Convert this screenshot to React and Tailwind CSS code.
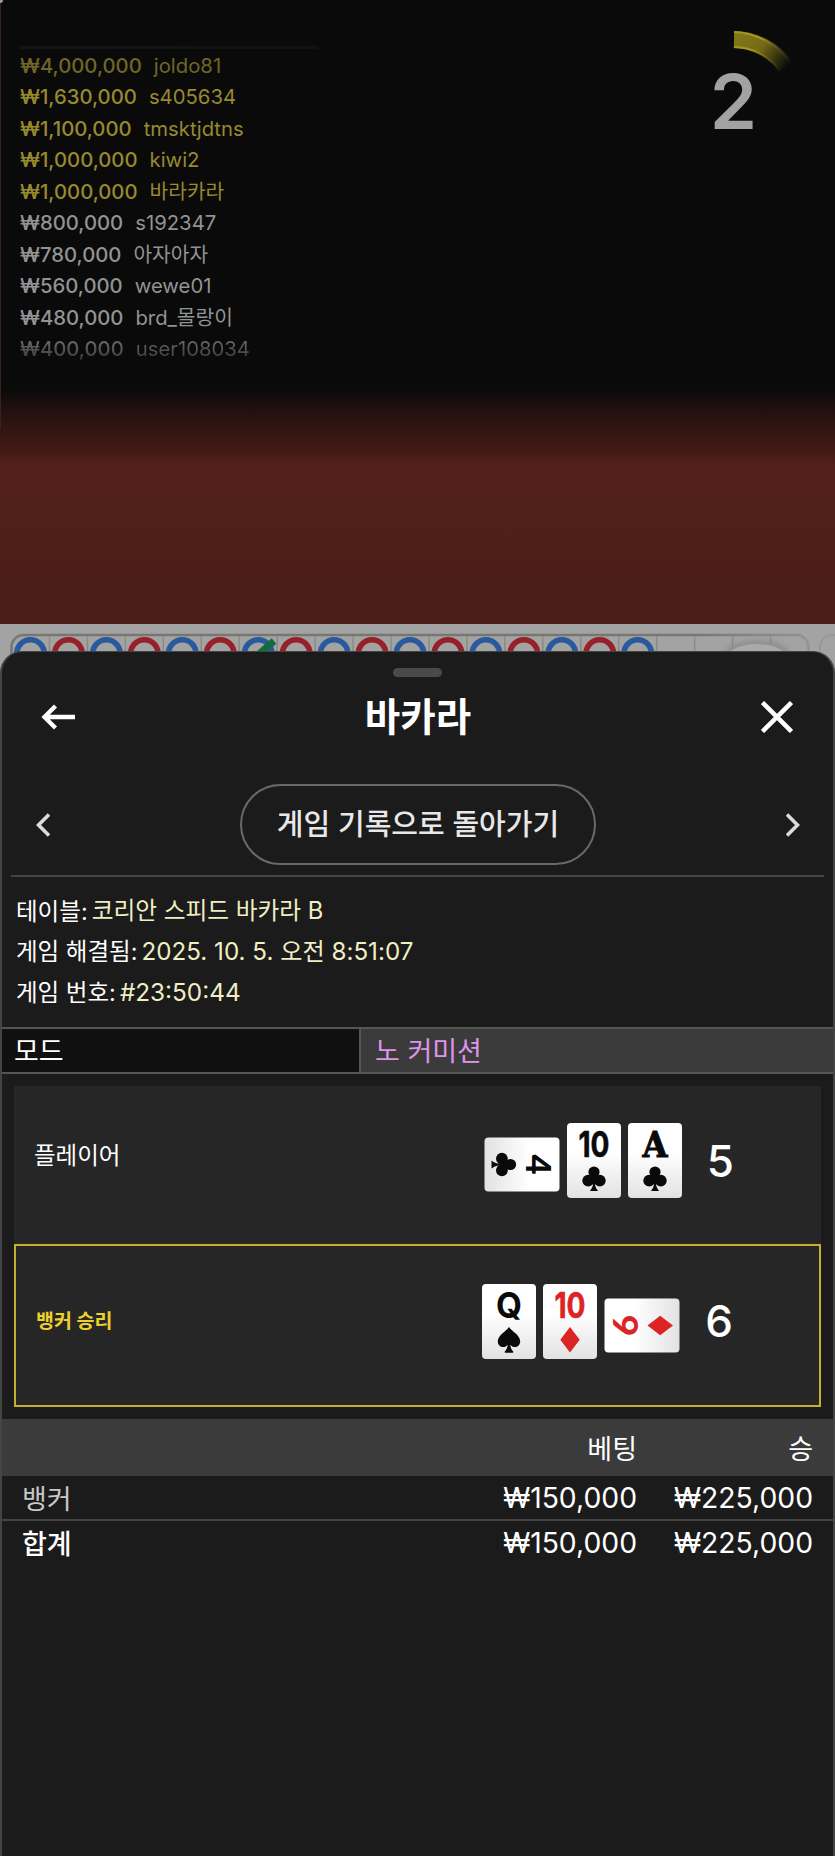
import { clsx } from 'clsx';

const bets = [
  { amount: '₩4,000,000', user: 'joldo81', tone: 'text-[#6f6627]' },
  { amount: '₩1,630,000', user: 's405634', tone: 'text-[#98892f]' },
  { amount: '₩1,100,000', user: 'tmsktjdtns', tone: 'text-[#98892f]' },
  { amount: '₩1,000,000', user: 'kiwi2', tone: 'text-[#98892f]' },
  { amount: '₩1,000,000', user: '바라카라', tone: 'text-[#98892f]' },
  { amount: '₩800,000', user: 's192347', tone: 'text-[#939393]' },
  { amount: '₩780,000', user: '아자아자', tone: 'text-[#939393]' },
  { amount: '₩560,000', user: 'wewe01', tone: 'text-[#939393]' },
  { amount: '₩480,000', user: 'brd_몰랑이', tone: 'text-[#939393]' },
  { amount: '₩400,000', user: 'user108034', tone: 'bg-gradient-to-b from-[#787878] to-[#303030] bg-clip-text text-transparent' },
];

const road = 'BPBPBPBPBPBPBPBPB'.split('');

const suits = {
  club: (
    <g>
      <circle cx="27" cy="49" r="5.6" />
      <circle cx="21.2" cy="57.6" r="5.9" />
      <circle cx="32.8" cy="57.6" r="5.9" />
      <path d="M25.5 52h3l1 6-1.6 3.3c.5 2.4 1.4 4.5 3.1 6.7h-8c1.7-2.2 2.6-4.3 3.1-6.7L24.5 58z" />
    </g>
  ),
  spade: <path d="M27 43c3 4.5 11.2 8.3 11.2 14.5 0 3.3-2.5 5.6-5.4 5.6-1.8 0-3.3-.8-4.5-2.3.3 3 1.1 4.9 2.9 6.7v1.3h-8.4v-1.3c1.8-1.8 2.6-3.7 2.9-6.7-1.2 1.5-2.7 2.3-4.5 2.3-2.9 0-5.4-2.3-5.4-5.6C15.8 51.3 24 47.5 27 43z" />,
  diamond: <path d="M27 43l9.7 12.7L27 68.5l-9.7-12.8z" />,
};

const ranks = {
  A: { width: 25, font: 'DejaVu Serif', size: 35, weight: 700, outline: 1 },
  4: { width: 20, font: 'Lato', size: 35, weight: 900, outline: 0 },
  10: { width: 31, font: 'Inter', size: 36, weight: 700, outline: 0.6 },
  Q: { width: 26, font: 'Inter', size: 35, weight: 700, outline: 0 },
  6: { width: 21, font: 'Lato', size: 35, weight: 900, outline: 0 },
};

const hands = {
  player: [
    { rank: '4', suit: 'club', turn: 'rotate-90' },
    { rank: '10', suit: 'club' },
    { rank: 'A', suit: 'club' },
  ],
  banker: [
    { rank: 'Q', suit: 'spade' },
    { rank: '10', suit: 'diamond' },
    { rank: '6', suit: 'diamond', turn: '-rotate-90' },
  ],
};

function PlayingCard({ rank, suit, turn }) {
  const { width, font, size, weight, outline } = ranks[rank];
  return (
    <div className={clsx('flex h-[75px] items-center justify-center', turn ? 'w-[76px]' : 'w-[54px]')}>
      <div
        className={clsx(
          'h-[75px] w-[54px] shrink-0 rounded-[4px] bg-gradient-to-b from-white from-40% to-[#e2e2e2]',
          turn && 'relative top-[4px]',
          turn
        )}
      >
        <svg
          viewBox="0 0 54 75"
          className={clsx(
            'h-full w-full overflow-visible',
            suit === 'diamond' ? 'fill-[#dc2424] stroke-[#dc2424]' : 'fill-[#0a0a0a] stroke-[#0a0a0a]'
          )}
          strokeWidth="0"
        >
          <text
            x={27 - width / 2}
            y="33.5"
            fontFamily={font}
            fontWeight={weight}
            fontSize={size}
            strokeWidth={outline}
            textLength={width}
            lengthAdjust="spacingAndGlyphs"
          >
            {rank}
          </text>
          {suits[suit]}
        </svg>
      </div>
    </div>
  );
}

function Hand({ cards, score, className }) {
  return (
    <div className={clsx('flex items-center', className)}>
      <div className="flex gap-[7px]">
        {cards.map((card, i) => (
          <PlayingCard key={i} {...card} />
        ))}
      </div>
      <span className="ml-[25px] text-[44px] leading-none font-medium">{score}</span>
    </div>
  );
}

function Stage() {
  return (
    <section className="relative flex h-[624px] justify-between bg-[linear-gradient(to_bottom,#0a0a0a_0,#0a0a0a_389px,#1c100e_405px,#3a1713_438px,#451a15_452px,#55201a_466px,#52201a_495px,#4e1e19_550px,#491d18_624px)]">
      {/* Table edge showing past the overlay */}
      <div className="absolute top-0 left-0 h-[430px] w-px bg-[#3a211b]" />
      <div className="absolute top-0 left-0 h-[3px] w-[3px] rounded-br-full bg-[#a09c92]" />

      <div className="ml-[20px] pt-[46px]">
        <div className="mb-px h-[3px] w-[298px] bg-gradient-to-r from-[#151515] to-[#111]" />
        <ul>
          {bets.map((bet) => (
            <li key={bet.user} className={clsx('flex h-[31.5px] w-fit items-center gap-[12px] text-[20.3px] leading-none', bet.tone)}>
              <span className="font-medium">{bet.amount}</span>
              <span>{bet.user}</span>
            </li>
          ))}
        </ul>
      </div>

      {/* Countdown */}
      <div className="mr-[21px] flex h-[160px] w-[160px] flex-col">
        <svg viewBox="0 0 160 160" className="h-full w-full">
          <defs>
            <linearGradient id="arc" gradientUnits="userSpaceOnUse" x1="79" y1="31" x2="132" y2="68">
              <stop offset="0" stopColor="#857a18" />
              <stop offset="0.5" stopColor="#756b16" />
              <stop offset="1" stopColor="#0a0a0a" />
            </linearGradient>
            <linearGradient id="rim" gradientUnits="userSpaceOnUse" x1="79" y1="31" x2="134" y2="68">
              <stop offset="0.4" stopColor="#a39720" />
              <stop offset="1" stopColor="#0a0a0a" />
            </linearGradient>
          </defs>
          <path d="M80 39.5A65 65 0 0 1 132 67" fill="none" stroke="url(#arc)" strokeWidth="17" />
          <path d="M80 32A72 72 0 0 1 137 64M80 47A58 58 0 0 1 125 69" fill="none" stroke="url(#rim)" strokeWidth="2" />
          <text x="79.5" y="128.5" textAnchor="middle" fontSize="76" fontWeight="600" className="fill-[#a2a2a2]">
            2
          </text>
        </svg>
      </div>
    </section>
  );
}

function BeadRoad() {
  return (
    <svg viewBox="0 0 835 56" className="block h-[56px] w-full bg-[#a4a3a3]">
      <defs>
        <linearGradient id="frame" x1="0" x2="1">
          <stop offset="0.85" stopColor="#767674" />
          <stop offset="1" stopColor="#929290" />
        </linearGradient>
        <filter id="soft" x="-30%" y="-50%" width="160%" height="200%">
          <feGaussianBlur stdDeviation="3.5" />
        </filter>
      </defs>
      <rect x="11.5" y="11" width="797" height="60" rx="12" fill="#a3a3a2" stroke="url(#frame)" strokeWidth="2.5" />
      <rect x="820" y="11" width="40" height="60" rx="12" fill="none" stroke="#989898" strokeWidth="2" />
      {Array.from({ length: 20 }, (_, i) => (
        <path key={i} d={`M${49.5 + i * 37.95} 12v30`} stroke="#8a8a89" strokeWidth="1.5" />
      ))}
      <ellipse cx="757" cy="30" rx="32" ry="13" fill="#8a8a8a" filter="url(#soft)" />
      <ellipse cx="757" cy="34" rx="30" ry="14" fill="#aaaaaa" />
      {road.map((side, i) => (
        <circle
          key={i}
          cx={30.5 + i * 37.95}
          cy="29.5"
          r="13.7"
          fill="none"
          stroke={side === 'B' ? '#295a9f' : '#98202a'}
          strokeWidth="5.6"
        />
      ))}
      <path d="M258 31l16-14" stroke="#146b3d" strokeWidth="7" />
    </svg>
  );
}

function InfoLine({ label, value, className }) {
  return (
    <p className="flex h-[40.5px] items-center gap-[4px] text-[23.5px] leading-none whitespace-pre">
      <span>{label}:</span>
      <span className={clsx('text-[#f0eec4]', className)}>{value}</span>
    </p>
  );
}

export default function App() {
  return (
    <div className="h-[1856px] w-[835px] overflow-hidden bg-[#0a0a0a] font-['Inter','Noto_Sans_CJK_KR',sans-serif] text-white">
      <Stage />
      <BeadRoad />

      <main className="relative -mt-[29px] flex h-[1210px] flex-col rounded-t-[22px] border-x-2 border-t border-[#444] bg-[#1b1b1b]">
        <div className="mx-auto mt-[16px] h-[9px] w-[49px] rounded-full bg-[#4a4a4a]" />

        <header className="flex h-[80px] items-center justify-between pr-[40px] pl-[39px]">
          <svg viewBox="0 0 34 26" className="h-[26px] w-[34px]" fill="none" stroke="white" strokeWidth="4.3">
            <path d="M34 13H4M14.5 2L3.5 13l11 11" />
          </svg>
          <h1 className="text-[38.5px] leading-none font-bold">바카라</h1>
          <svg viewBox="0 0 32 32" className="h-[32px] w-[32px]" fill="none" stroke="white" strokeWidth="4.5">
            <path d="M1.5 1.5l29 29M30.5 1.5l-29 29" />
          </svg>
        </header>

        <nav className="mx-[9px] flex h-[120px] items-end justify-between border-b-2 border-[#444] pr-[24px] pb-[10px] pl-[25px]">
          <svg viewBox="0 0 14 24" className="mb-[28px] h-[24px] w-[14px]" fill="none" stroke="#dcdcdc" strokeWidth="3.6">
            <path d="M13 1.5L2.5 12 13 22.5" />
          </svg>
          <button className="flex h-[81px] w-[356px] items-center justify-center rounded-full border-2 border-[#696969] text-[29px] leading-none font-medium text-[#e8e8e8]">
            게임 기록으로 돌아가기
          </button>
          <svg viewBox="0 0 14 24" className="mb-[28px] h-[24px] w-[14px]" fill="none" stroke="#dcdcdc" strokeWidth="3.6">
            <path d="M1 1.5L11.5 12 1 22.5" />
          </svg>
        </nav>

        <section className="h-[150px] pt-[14px] pl-[14px]">
          <InfoLine label="테이블" value="코리안 스피드 바카라 B" className="text-[23.7px]" />
          <InfoLine label="게임 해결됨" value="2025. 10. 5. 오전 8:51:07" className="text-[24.2px]" />
          <InfoLine label="게임 번호" value="#23:50:44" className="text-[24.3px]" />
        </section>

        <dl className="flex h-[47px] border-y-2 border-[#555] text-[27px] leading-none">
          <dt className="flex w-[359px] items-center border-r-2 border-[#555] bg-[#101010] pt-[2px] pl-[12px]">모드</dt>
          <dd className="flex flex-1 items-center bg-[#3b3b3b] pt-[2px] pl-[14px] text-[#de94ea]">노 커미션</dd>
        </dl>

        <section className="mx-[12px] mt-[12px] bg-[#262626]">
          <div className="flex h-[158px] items-center justify-between">
            <h2 className="mb-[18px] pl-[20px] text-[23.5px] leading-none">플레이어</h2>
            <Hand cards={hands.player} score="5" className="mr-[87px] mb-[9px]" />
          </div>
          <div className="flex h-[163px] items-center justify-between border-2 border-[#c4b030]">
            <h2 className="mb-[7px] pl-[20px] text-[19.5px] leading-none font-bold text-[#ecd02c]">뱅커 승리</h2>
            <Hand cards={hands.banker} score="6" className="mr-[86px] mb-[9px]" />
          </div>
        </section>

        <table className="mt-[12px] w-full text-right text-[28.3px] leading-none">
          <thead>
            <tr className="h-[57px] bg-[#3b3b3b]">
              <th />
              <th className="w-[260px] pt-[3px] pr-[2px] text-[27px] font-normal">베팅</th>
              <th className="w-[194px] pt-[3px] pr-[20px] text-[27px] font-normal">승</th>
            </tr>
          </thead>
          <tbody>
            <tr className="h-[44px] border-b-2 border-[#444]">
              <td className="pt-[4px] pl-[20px] text-left text-[27px] text-[#c8c8c8]">뱅커</td>
              <td className="pt-[2px] pr-[2px]">₩150,000</td>
              <td className="pt-[2px] pr-[20px]">₩225,000</td>
            </tr>
            <tr className="h-[44px]">
              <td className="pt-[4px] pl-[20px] text-left text-[27px] font-medium">합계</td>
              <td className="pt-[2px] pr-[2px]">₩150,000</td>
              <td className="pt-[2px] pr-[20px]">₩225,000</td>
            </tr>
          </tbody>
        </table>
      </main>
    </div>
  );
}
